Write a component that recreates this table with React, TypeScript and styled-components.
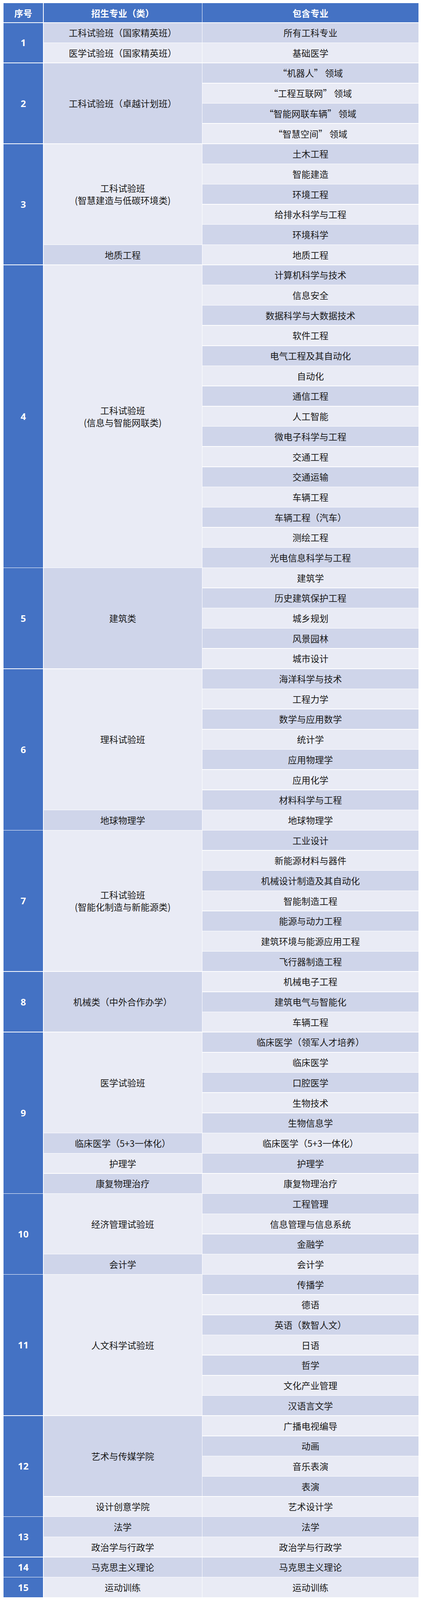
import React from "react";
import styled, { createGlobalStyle } from "styled-components";

const GlobalStyle = createGlobalStyle`
  html, body { margin: 0; padding: 0; background: #ffffff; }
  body { font-family: "Noto Sans CJK SC", "Noto Sans", sans-serif; }
`;

type Major = { name: string[]; subs: string[] };
type Group = { no: string; majors: Major[] };

const groups: Group[] = [
  {
    no: "1",
    majors: [
      { name: ["工科试验班（国家精英班）"], subs: ["所有工科专业"] },
      { name: ["医学试验班（国家精英班）"], subs: ["基础医学"] },
    ],
  },
  {
    no: "2",
    majors: [
      {
        name: ["工科试验班（卓越计划班）"],
        subs: ["“机器人” 领域", "“工程互联网” 领域", "“智能网联车辆” 领域", "“智慧空间” 领域"],
      },
    ],
  },
  {
    no: "3",
    majors: [
      {
        name: ["工科试验班", "(智慧建造与低碳环境类)"],
        subs: ["土木工程", "智能建造", "环境工程", "给排水科学与工程", "环境科学"],
      },
      { name: ["地质工程"], subs: ["地质工程"] },
    ],
  },
  {
    no: "4",
    majors: [
      {
        name: ["工科试验班", "(信息与智能网联类)"],
        subs: [
          "计算机科学与技术",
          "信息安全",
          "数据科学与大数据技术",
          "软件工程",
          "电气工程及其自动化",
          "自动化",
          "通信工程",
          "人工智能",
          "微电子科学与工程",
          "交通工程",
          "交通运输",
          "车辆工程",
          "车辆工程（汽车）",
          "测绘工程",
          "光电信息科学与工程",
        ],
      },
    ],
  },
  {
    no: "5",
    majors: [
      {
        name: ["建筑类"],
        subs: ["建筑学", "历史建筑保护工程", "城乡规划", "风景园林", "城市设计"],
      },
    ],
  },
  {
    no: "6",
    majors: [
      {
        name: ["理科试验班"],
        subs: ["海洋科学与技术", "工程力学", "数学与应用数学", "统计学", "应用物理学", "应用化学", "材料科学与工程"],
      },
      { name: ["地球物理学"], subs: ["地球物理学"] },
    ],
  },
  {
    no: "7",
    majors: [
      {
        name: ["工科试验班", "(智能化制造与新能源类)"],
        subs: [
          "工业设计",
          "新能源材料与器件",
          "机械设计制造及其自动化",
          "智能制造工程",
          "能源与动力工程",
          "建筑环境与能源应用工程",
          "飞行器制造工程",
        ],
      },
    ],
  },
  {
    no: "8",
    majors: [
      { name: ["机械类（中外合作办学）"], subs: ["机械电子工程", "建筑电气与智能化", "车辆工程"] },
    ],
  },
  {
    no: "9",
    majors: [
      {
        name: ["医学试验班"],
        subs: ["临床医学（领军人才培养）", "临床医学", "口腔医学", "生物技术", "生物信息学"],
      },
      { name: ["临床医学（5+3一体化）"], subs: ["临床医学（5+3一体化）"] },
      { name: ["护理学"], subs: ["护理学"] },
      { name: ["康复物理治疗"], subs: ["康复物理治疗"] },
    ],
  },
  {
    no: "10",
    majors: [
      { name: ["经济管理试验班"], subs: ["工程管理", "信息管理与信息系统", "金融学"] },
      { name: ["会计学"], subs: ["会计学"] },
    ],
  },
  {
    no: "11",
    majors: [
      {
        name: ["人文科学试验班"],
        subs: ["传播学", "德语", "英语（数智人文）", "日语", "哲学", "文化产业管理", "汉语言文学"],
      },
    ],
  },
  {
    no: "12",
    majors: [
      { name: ["艺术与传媒学院"], subs: ["广播电视编导", "动画", "音乐表演", "表演"] },
      { name: ["设计创意学院"], subs: ["艺术设计学"] },
    ],
  },
  {
    no: "13",
    majors: [
      { name: ["法学"], subs: ["法学"] },
      { name: ["政治学与行政学"], subs: ["政治学与行政学"] },
    ],
  },
  { no: "14", majors: [{ name: ["马克思主义理论"], subs: ["马克思主义理论"] }] },
  { no: "15", majors: [{ name: ["运动训练"], subs: ["运动训练"] }] },
];

const BLUE = "#4472c4";
const DARK = "#cfd5ea";
const LIGHT = "#e9ebf5";

const Page = styled.div`
  padding: 8px 9px 0 9px;
  background: #ffffff;
`;

const Table = styled.div`
  display: grid;
  grid-template-columns: 101px 405px 1fr;
  grid-template-rows: 49px;
  grid-auto-rows: 50.2px;
  gap: 1.5px;
  background: #ffffff;
  width: 1062px;
`;

const Cell = styled.div<{ $col: number; $start: number; $span: number }>`
  grid-column: ${(p) => p.$col};
  grid-row: ${(p) => p.$start} / span ${(p) => p.$span};
  display: flex;
  flex-direction: column;
  align-items: center;
  justify-content: center;
  text-align: center;
  min-width: 0;
  overflow: hidden;
`;

const HeadCell = styled(Cell)`
  background: ${BLUE};
  color: #ffffff;
  font-family: "Noto Sans CJK SC", "Noto Sans", sans-serif;
  font-weight: 700;
  font-size: 23px;
  line-height: 30px;
`;

const NumCell = styled(Cell)`
  background: ${BLUE};
  color: #ffffff;
  font-family: "Open Sans", "Noto Sans", sans-serif;
  font-weight: 700;
  font-size: 24px;
  line-height: 30px;
`;

const TextCell = styled(Cell)<{ $dark: boolean }>`
  background: ${(p) => (p.$dark ? DARK : LIGHT)};
  color: #1a1a1a;
  font-family: "Noto Sans CJK SC", "Noto Sans", sans-serif;
  font-size: 23px;
  line-height: 31px;
  white-space: nowrap;
`;

const Line = styled.span`
  display: block;
`;

export default function App() {
  const cells: React.ReactNode[] = [];
  cells.push(
    <HeadCell key="h1" $col={1} $start={1} $span={1}>序号</HeadCell>,
    <HeadCell key="h2" $col={2} $start={1} $span={1}>招生专业（类）</HeadCell>,
    <HeadCell key="h3" $col={3} $start={1} $span={1}>包含专业</HeadCell>
  );
  let row = 2;
  let majorIndex = 0;
  let subIndex = 0;
  groups.forEach((g) => {
    const total = g.majors.reduce((s, m) => s + m.subs.length, 0);
    cells.push(
      <NumCell key={`n${g.no}`} $col={1} $start={row} $span={total}>
        {g.no}
      </NumCell>
    );
    g.majors.forEach((m) => {
      cells.push(
        <TextCell
          key={`m${majorIndex}`}
          $col={2}
          $start={row}
          $span={m.subs.length}
          $dark={majorIndex % 2 === 0}
        >
          {m.name.map((l, i) => (
            <Line key={i}>{l}</Line>
          ))}
        </TextCell>
      );
      majorIndex++;
      m.subs.forEach((s) => {
        cells.push(
          <TextCell key={`s${subIndex}`} $col={3} $start={row} $span={1} $dark={subIndex % 2 === 0}>
            {s}
          </TextCell>
        );
        subIndex++;
        row++;
      });
    });
  });

  return (
    <>
      <GlobalStyle />
      <Page>
        <Table lang="zh-CN">{cells}</Table>
      </Page>
    </>
  );
}
